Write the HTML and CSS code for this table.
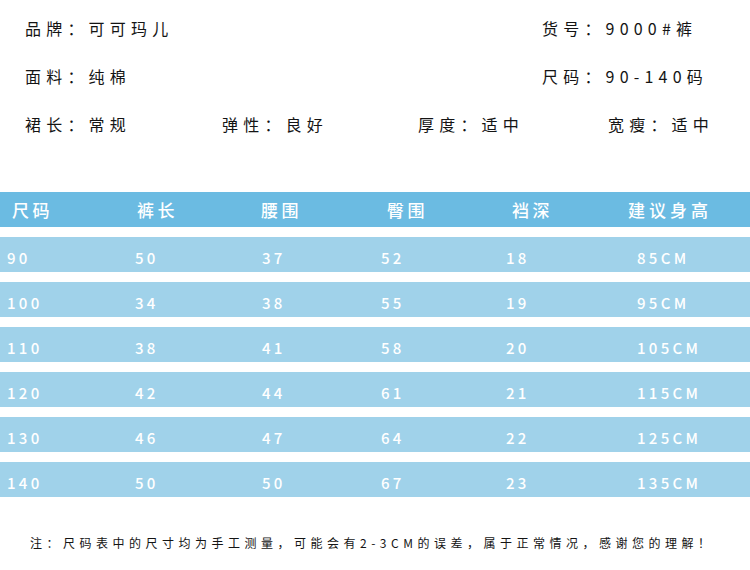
FILE: index.html
```html
<!DOCTYPE html>
<html lang="zh">
<head>
<meta charset="utf-8">
<title>尺码表</title>
<link rel="stylesheet" href="styles.css">
</head>
<body>
<div class="page">
  <section class="info">
    <div class="info-row">
      <span class="item w-main">品牌：可可玛儿</span>
      <span class="item">货号：9000#裤</span>
    </div>
    <div class="info-row">
      <span class="item w-main">面料：纯棉</span>
      <span class="item">尺码：90-140码</span>
    </div>
    <div class="info-row">
      <span class="item w-a">裙长：常规</span>
      <span class="item w-b">弹性：良好</span>
      <span class="item w-c">厚度：适中</span>
      <span class="item">宽瘦：适中</span>
    </div>
  </section>

  <section class="table">
    <div class="row head">
      <span>尺码</span><span>裤长</span><span>腰围</span><span>臀围</span><span>裆深</span><span>建议身高</span>
    </div>
    <div class="row data">
      <span>90</span><span>50</span><span>37</span><span>52</span><span>18</span><span>85CM</span>
    </div>
    <div class="row data">
      <span>100</span><span>34</span><span>38</span><span>55</span><span>19</span><span>95CM</span>
    </div>
    <div class="row data">
      <span>110</span><span>38</span><span>41</span><span>58</span><span>20</span><span>105CM</span>
    </div>
    <div class="row data">
      <span>120</span><span>42</span><span>44</span><span>61</span><span>21</span><span>115CM</span>
    </div>
    <div class="row data">
      <span>130</span><span>46</span><span>47</span><span>64</span><span>22</span><span>125CM</span>
    </div>
    <div class="row data">
      <span>140</span><span>50</span><span>50</span><span>67</span><span>23</span><span>135CM</span>
    </div>
  </section>

  <p class="note">注：尺码表中的尺寸均为手工测量，可能会有2-3CM的误差，属于正常情况，感谢您的理解！</p>
</div>
</body>
</html>
```

FILE: styles.css
```css
html, body {
  margin: 0;
  padding: 0;
  background: #ffffff;
}

.page {
  width: 750px;
  height: 570px;
  overflow: hidden;
  font-family: "Noto Sans CJK SC", "Noto Sans", sans-serif;
  color: #141414;
}

.info {
  padding: 16px 0 0 25px;
  display: flex;
  flex-direction: column;
  gap: 24px;
}

.info-row {
  display: flex;
  height: 24px;
  align-items: center;
}

.item {
  font-size: 16px;
  line-height: 24px;
  letter-spacing: 5.2px;
  white-space: nowrap;
}

.w-main { width: 517px; }
.w-a { width: 197px; }
.w-b { width: 196px; }
.w-c { width: 190px; }

.table {
  margin-top: 56px;
  display: flex;
  flex-direction: column;
  gap: 10px;
}

.row {
  display: grid;
  grid-template-columns: 125px 125px 125px 125px 125px 1fr;
  height: 35px;
  align-items: center;
  color: #ffffff;
  white-space: nowrap;
}

.head {
  background: #6bbbe2;
  font-size: 17px;
  font-weight: 500;
  letter-spacing: 3.5px;
}

.head span:nth-child(1) { padding-left: 12px; }
.head span:nth-child(2) { padding-left: 12px; }
.head span:nth-child(3) { padding-left: 11px; }
.head span:nth-child(4) { padding-left: 12px; }
.head span:nth-child(5) { padding-left: 12px; }
.head span:nth-child(6) { padding-left: 3px; letter-spacing: 4px; }

.data {
  background: #a0d2ea;
  font-size: 15px;
  font-weight: 500;
  letter-spacing: 3.3px;
  padding-top: 6px;
  box-sizing: border-box;
}

.data span:nth-child(1) { padding-left: 7px; }
.data span:nth-child(2) { padding-left: 10px; }
.data span:nth-child(3) { padding-left: 12px; }
.data span:nth-child(4) { padding-left: 6px; }
.data span:nth-child(5) { padding-left: 6px; }
.data span:nth-child(6) { padding-left: 12px; }

.note {
  margin: 36px 0 0 30px;
  font-size: 12px;
  line-height: 20px;
  letter-spacing: 4.5px;
  white-space: nowrap;
}
```
